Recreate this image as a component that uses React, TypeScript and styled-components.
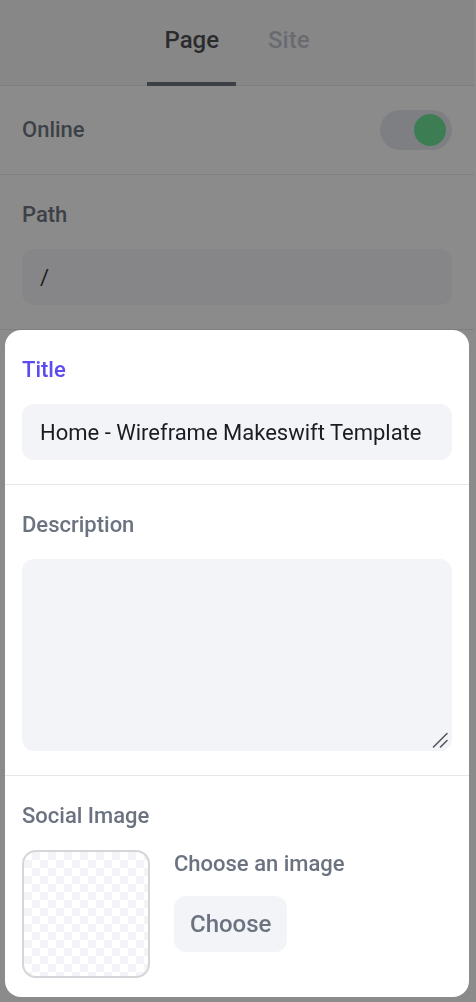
import React from "react";
import styled, { createGlobalStyle } from "styled-components";

const GlobalStyle = createGlobalStyle`
  html, body { margin: 0; padding: 0; background: #ffffff; }
  body { font-family: Roboto, "Noto Sans", "Liberation Sans", sans-serif; }
  * { box-sizing: border-box; }
`;

const Panel = styled.div`
  width: 474px;
  min-height: 1002px;
  background: #ffffff;
  position: relative;
`;

const Header = styled.div`
  display: flex;
  justify-content: center;
  align-items: flex-start;
  gap: 15px;
  height: 86px;
  background: #f6f6f7;
  box-shadow: inset 0 -1px 0 #e4e4e7;
`;

const Tab = styled.button<{ $active?: boolean }>`
  all: unset;
  display: block;
  box-sizing: border-box;
  padding: 24px 17px 26px;
  font: 500 24px/32px Roboto, sans-serif;
  color: ${(p) => (p.$active ? "#1e2126" : "#b3b5c1")};
  border-bottom: 4px solid ${(p) => (p.$active ? "#4b5563" : "transparent")};
  cursor: pointer;
`;

const Row = styled.div`
  padding: 24px 22px;
  border-bottom: 1px solid #e4e4e7;
  display: flex;
  flex-direction: column;
  gap: 18px;
`;

const InlineRow = styled(Row)`
  flex-direction: row;
  align-items: center;
  justify-content: space-between;
`;

const Label = styled.div<{ $color?: string }>`
  font: 500 22px/32px Roboto, sans-serif;
  color: ${(p) => p.$color ?? "#4b5563"};
`;

const Toggle = styled.div`
  width: 72px;
  height: 40px;
  border-radius: 20px;
  background: #e2e3ec;
  padding: 4px 6px;
  display: flex;
  justify-content: flex-end;
`;

const Knob = styled.div`
  width: 32px;
  height: 32px;
  border-radius: 50%;
  background: #4ade80;
`;

const TextInput = styled.input<{ $dark?: boolean }>`
  display: block;
  width: 100%;
  height: 56px;
  border: none;
  outline: none;
  border-radius: 12px;
  background: #f3f4f8;
  padding: 0 18px;
  font: 400 22px Roboto, sans-serif;
  color: ${(p) => (p.$dark ? "#000000" : "#1a1c23")};
`;

const AreaWrap = styled.div`
  position: relative;
`;

const TextArea = styled.textarea`
  display: block;
  width: 100%;
  height: 192px;
  border: none;
  outline: none;
  border-radius: 12px;
  background: #f3f4f8;
  padding: 14px 18px;
  font: 400 22px Roboto, sans-serif;
  color: #1a1c23;
  resize: none;
`;

const Grip = styled.svg`
  position: absolute;
  right: 4px;
  bottom: 3px;
  width: 16px;
  height: 16px;
  pointer-events: none;
`;

const Overlay = styled.div`
  position: fixed;
  inset: 0;
  background: rgba(51, 51, 51, 0.57);
  z-index: 1;
`;

const FocusCard = styled.div`
  position: relative;
  z-index: 2;
  margin: 0 5px;
  background: #ffffff;
  border-radius: 16px;
  overflow: hidden;
`;

const CardSection = styled.div<{ $last?: boolean }>`
  padding: 24px 17px ${(p) => (p.$last ? "19px" : "24px")};
  border-bottom: ${(p) => (p.$last ? "none" : "1px solid #e6e6eb")};
  display: flex;
  flex-direction: column;
  gap: 18px;
`;

const ImageRow = styled.div`
  display: flex;
  gap: 24px;
  align-items: flex-start;
`;

const Checker = styled.div`
  width: 128px;
  height: 128px;
  border: 2px solid #d6d6da;
  border-radius: 14px;
  background-color: #ffffff;
  background-image: linear-gradient(45deg, #f3f4f8 25%, transparent 25%, transparent 75%, #f3f4f8 75%),
    linear-gradient(45deg, #f3f4f8 25%, transparent 25%, transparent 75%, #f3f4f8 75%);
  background-size: 16px 16px;
  background-position: 0 0, 8px 8px;
  flex-shrink: 0;
`;

const ImageInfo = styled.div`
  display: flex;
  flex-direction: column;
  gap: 18px;
`;

const InfoText = styled.div`
  font: 500 22px/28px Roboto, sans-serif;
  color: #6b7280;
`;

const ChooseButton = styled.button`
  all: unset;
  display: block;
  box-sizing: border-box;
  align-self: flex-start;
  height: 56px;
  padding: 0 16px;
  border-radius: 12px;
  background: #f3f4f8;
  font: 500 24px/56px Roboto, sans-serif;
  color: #6b7280;
  cursor: pointer;
`;

export default function App() {
  return (
    <>
      <GlobalStyle />
      <Panel>
        <Header>
          <Tab $active>Page</Tab>
          <Tab>Site</Tab>
        </Header>
        <InlineRow>
          <Label>Online</Label>
          <Toggle>
            <Knob />
          </Toggle>
        </InlineRow>
        <Row>
          <Label>Path</Label>
          <TextInput $dark value="/" readOnly />
        </Row>
        <Overlay />
        <FocusCard>
          <CardSection>
            <Label $color="#5d4cf0">Title</Label>
            <TextInput value="Home - Wireframe Makeswift Template" readOnly />
          </CardSection>
          <CardSection>
            <Label $color="#6b7280">Description</Label>
            <AreaWrap>
              <TextArea readOnly value="" />
              <Grip viewBox="0 0 16 16">
                <path d="M1.5 15 L15 1.5 M8.5 15 L15 8.5" stroke="#555860" strokeWidth="1.6" strokeLinecap="round" fill="none" />
              </Grip>
            </AreaWrap>
          </CardSection>
          <CardSection $last>
            <Label $color="#6b7280">Social Image</Label>
            <ImageRow>
              <Checker />
              <ImageInfo>
                <InfoText>Choose an image</InfoText>
                <ChooseButton>Choose</ChooseButton>
              </ImageInfo>
            </ImageRow>
          </CardSection>
        </FocusCard>
      </Panel>
    </>
  );
}
